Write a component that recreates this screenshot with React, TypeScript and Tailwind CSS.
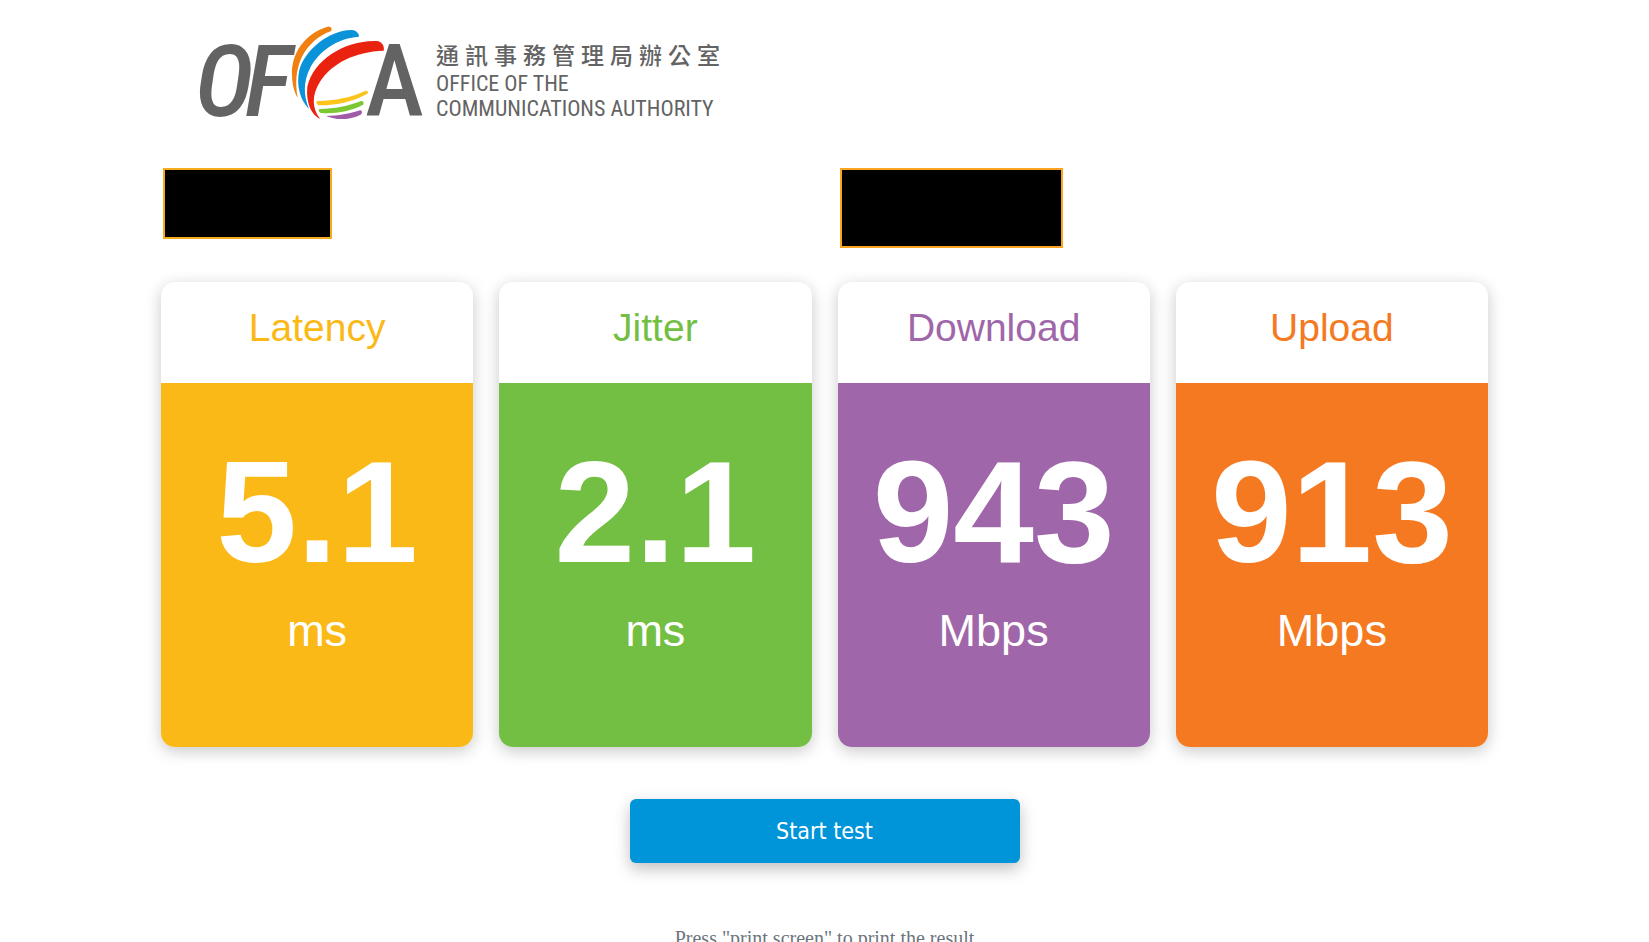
const metrics = [
  { name: "Latency", value: "5.1", unit: "ms", text: "text-[#fbb917]", fill: "bg-[#fbb917]" },
  { name: "Jitter", value: "2.1", unit: "ms", text: "text-[#73bf44]", fill: "bg-[#73bf44]" },
  { name: "Download", value: "943", unit: "Mbps", text: "text-[#9f66a9]", fill: "bg-[#9f66a9]" },
  { name: "Upload", value: "913", unit: "Mbps", text: "text-[#f57920]", fill: "bg-[#f57920]" },
];

const chineseName = "通訊事務管理局辦公室";

function LogoMark() {
  return (
    <svg viewBox="200 25 224 97" className="h-[97px] w-56 shrink-0 overflow-visible" role="img" aria-label="OFCA">
      <g
        fill="#636363"
        fontFamily="'Roboto Condensed', Roboto, sans-serif"
        fontSize="100"
        fontWeight="500"
      >
        <text x="195" y="116" fontStyle="italic">O</text>
        <text x="245" y="116" fontStyle="italic">F</text>
        <text x="365" y="116">A</text>
      </g>
      <g transform="translate(285 20) scale(0.3333)">
        <path fill="#f08010" d="M128 20C60 40 18 100 21 165C22 200 30 220 38 233C30 190 33 150 50 112C70 72 105 45 137 34C144 29 138 18 128 20Z" />
        <path fill="#0a93d8" d="M198 30C130 32 60 90 43 150C33 195 45 240 72 267C55 225 55 185 75 145C100 95 155 55 221 50C226 46 214 28 198 30Z" />
        <path fill="#e9230f" d="M275 63C180 60 85 120 67 200C62 250 80 285 106 297C80 265 80 225 105 185C140 130 210 95 296 92C300 80 290 63 275 63Z" />
        <path fill="#fbc51c" d="M97 243C150 243 200 232 240 213C248 210 252 218 246 222C205 245 150 257 103 256C95 256 92 244 97 243Z" />
        <path fill="#7cc832" d="M103 267C150 266 190 258 228 243C237 241 238 252 233 255C195 275 150 282 108 279C101 278 100 268 103 267Z" />
        <path fill="#a05aa8" d="M123 288C160 288 195 281 225 271C232 270 233 280 227 284C195 300 155 302 123 288Z" />
      </g>
    </svg>
  );
}

export default function App() {
  return (
    <main className="mx-auto w-full max-w-[1327px] bg-white font-['Liberation_Sans',sans-serif]">
      <header className="flex items-start gap-3 pt-[25px] pl-[39px] text-[#636363]">
        <LogoMark />
        <div className="pt-[17px] font-['Roboto_Condensed',Roboto,sans-serif] text-[22px] leading-[25px]">
          <p lang="zh-Hant" className="flex gap-1.5 pb-1 font-['Noto_Sans_CJK_TC',sans-serif] text-[23px] leading-[25px] font-medium">
            {[...chineseName].map((char) => (
              <span key={char}>{char}</span>
            ))}
          </p>
          <p>OFFICE OF THE</p>
          <p>COMMUNICATIONS AUTHORITY</p>
        </div>
      </header>

      <section className="mt-[46px] grid h-[114px] grid-cols-2 items-start gap-7 pl-[2px]">
        <div className="h-[71px] w-[169px] border-2 border-[#f5ac1c] bg-black" />
        <div className="h-20 w-[223px] border-2 border-[#fca420] bg-black" />
      </section>

      <section className="grid grid-cols-4 gap-[26px]">
        {metrics.map((m) => (
          <article key={m.name} className="overflow-hidden rounded-[14px] bg-white text-center shadow-[0_4px_16px_rgba(0,0,0,0.22)]">
            <h2 className={`h-[101px] pt-[22px] text-[39px] leading-[48px] ${m.text}`}>{m.name}</h2>
            <div className={`h-[364px] pt-[49px] text-white ${m.fill}`}>
              <p className="text-[145px] leading-[160px] font-bold">{m.value}</p>
              <p className="pt-[13px] text-[45px] leading-[52px]">{m.unit}</p>
            </div>
          </article>
        ))}
      </section>

      <footer className="flex flex-col items-center pt-[52px]">
        <button
          type="button"
          className="h-16 w-[390px] rounded-md bg-[#0095d9] font-['DejaVu_Sans_Condensed','DejaVu_Sans',sans-serif] text-[23px] text-white shadow-[0_6px_16px_rgba(0,0,0,0.25)]"
        >
          Start test
        </button>
        <p className="pt-[63px] font-['Liberation_Serif',serif] text-[20px] leading-6 text-[#6c757d]">
          Press "print screen" to print the result
        </p>
      </footer>
    </main>
  );
}
